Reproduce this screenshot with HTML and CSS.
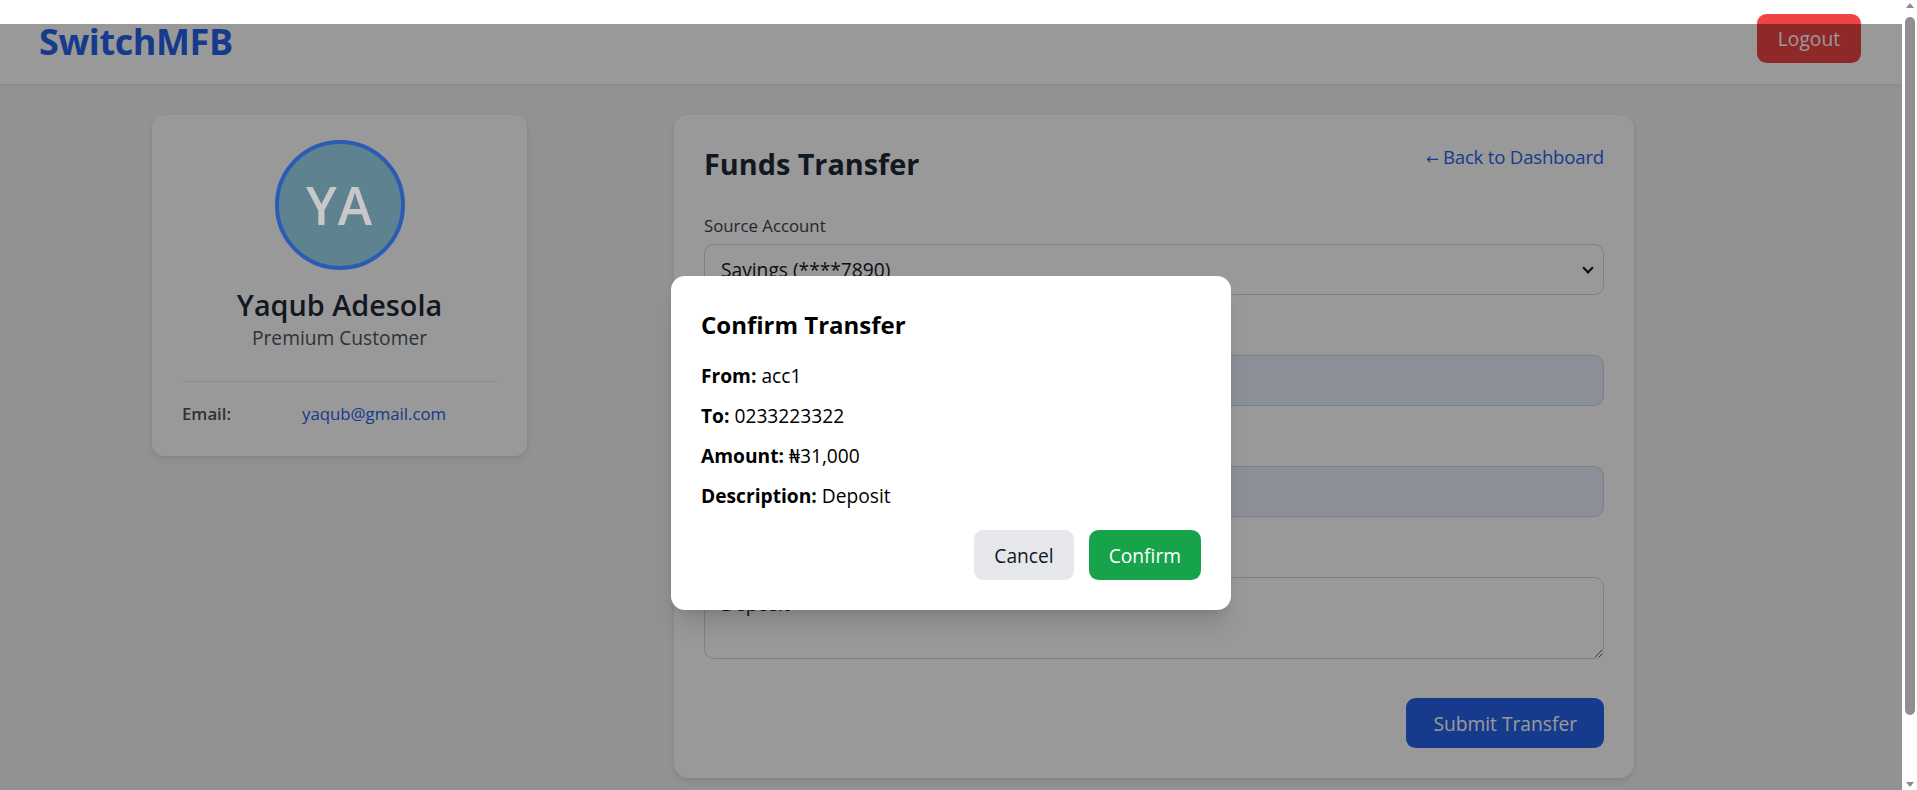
FILE: index.html
```html
<!DOCTYPE html>
<html lang="en">
<head>
<meta charset="utf-8">
<title>SwitchMFB - Funds Transfer</title>
<link rel="stylesheet" href="styles.css">
</head>
<body>
<header class="topbar">
  <div class="logo">SwitchMFB</div>
  <button type="button" class="btn-logout">Logout</button>
</header>

<main class="layout">
  <aside class="profile-card">
    <div class="avatar">YA</div>
    <h2 class="profile-name">Yaqub Adesola</h2>
    <p class="profile-tier">Premium Customer</p>
    <div class="profile-details">
      <div class="detail-row">
        <span class="detail-label">Email:</span>
        <span class="detail-value">yaqub@gmail.com</span>
      </div>
    </div>
  </aside>

  <section class="transfer-card">
    <div class="transfer-head">
      <h1 class="transfer-title">Funds Transfer</h1>
      <a class="back-link" href="#"><span class="back-arrow">←</span> Back to Dashboard</a>
    </div>
    <form class="transfer-form">
      <div class="field">
        <label class="field-label">Source Account</label>
        <div class="select-wrap">
          <select class="field-control field-select">
            <option>Savings (****7890)</option>
          </select>
        </div>
      </div>
      <div class="field">
        <label class="field-label">Destination Account Number</label>
        <input class="field-control autofilled" type="text" value="0233223322">
      </div>
      <div class="field">
        <label class="field-label">Amount (₦)</label>
        <input class="field-control autofilled" type="text" value="31000">
      </div>
      <div class="field field-last">
        <label class="field-label">Description</label>
        <textarea class="field-control field-textarea" rows="2">Deposit</textarea>
      </div>
      <div class="form-actions">
        <button type="button" class="btn-submit">Submit Transfer</button>
      </div>
    </form>
  </section>
</main>

<div class="modal-overlay">
  <div class="modal">
    <h3 class="modal-title">Confirm Transfer</h3>
    <p class="modal-line"><strong>From:</strong> acc1</p>
    <p class="modal-line"><strong>To:</strong> 0233223322</p>
    <p class="modal-line"><strong>Amount:</strong> ₦31,000</p>
    <p class="modal-line"><strong>Description:</strong> Deposit</p>
    <div class="modal-actions">
      <button type="button" class="btn-cancel">Cancel</button>
      <button type="button" class="btn-confirm">Confirm</button>
    </div>
  </div>
</div>

<div class="scrollbar" aria-hidden="true">
  <span class="sb-arrow sb-up"></span>
  <span class="sb-thumb"></span>
  <span class="sb-arrow sb-down"></span>
</div>
</body>
</html>
```

FILE: styles.css
```css
* {
  box-sizing: border-box;
}

html {
  margin: 0;
  padding: 0;
  background: #f3f4f6;
}

body {
  position: relative;
  margin: 0 15px 0 0;
  padding: 0;
  min-height: 862px;
  background: #f3f4f6;
  font-family: "Open Sans", "Noto Sans", sans-serif;
  font-size: 19.2px;
  line-height: 28.8px;
  color: #111827;
}

html::-webkit-scrollbar {
  display: none;
}

/* Emulated browser scrollbar */
.scrollbar {
  position: fixed;
  z-index: 100;
  top: 0;
  right: 0;
  width: 15px;
  height: 790px;
  background: #ffffff;
  display: flex;
  flex-direction: column;
  align-items: center;
}

.sb-arrow {
  display: block;
  width: 0;
  height: 0;
  border-left: 4px solid transparent;
  border-right: 4px solid transparent;
}

.sb-up {
  margin-top: 3px;
  border-bottom: 5px solid #8b8b8b;
}

.sb-thumb {
  display: block;
  width: 10px;
  height: 698px;
  margin: 9px 0 0 1px;
  border-radius: 5px;
  background: #8f8f8f;
}

.sb-down {
  margin-top: auto;
  margin-bottom: 3px;
  border-top: 5px solid #8b8b8b;
}

/* Header */
.topbar {
  height: 84px;
  background: #ffffff;
  display: flex;
  align-items: center;
  justify-content: space-between;
  padding: 0 41px 0 39px;
  box-shadow: 0 1px 3px rgba(0, 0, 0, 0.08);
}

.logo {
  font-size: 36px;
  line-height: 48px;
  font-weight: 700;
  color: #2563eb;
  letter-spacing: -0.4px;
}

.btn-logout {
  height: 49px;
  margin-bottom: 7px;
  padding: 0 21px;
  border: 0;
  border-radius: 9.6px;
  background: #ef4444;
  color: #ffffff;
  font-family: inherit;
  font-size: 19.2px;
}

/* Layout */
.layout {
  display: flex;
  align-items: flex-start;
  gap: 147px;
  padding: 31px 0 0 152px;
}

/* Profile card */
.profile-card {
  width: 375px;
  flex: none;
  background: #ffffff;
  border-radius: 12px;
  padding: 25px 30px 30px;
  box-shadow: 0 4px 8px rgba(0, 0, 0, 0.08), 0 1px 3px rgba(0, 0, 0, 0.06);
  text-align: center;
}

.avatar {
  position: relative;
  z-index: 60;
  width: 130px;
  height: 130px;
  margin: 0 auto;
  border: 4.8px solid #2b5cb5;
  border-radius: 50%;
  background: #5f8290;
  color: #c8c8c8;
  font-size: 52px;
  font-weight: 600;
  display: flex;
  align-items: center;
  justify-content: center;
  letter-spacing: 1px;
}

.profile-name {
  margin: 16px 0 0;
  font-size: 28.8px;
  line-height: 38.4px;
  font-weight: 600;
  color: #1f2937;
}

.profile-tier {
  margin: 0;
  font-size: 19.2px;
  line-height: 28.8px;
  color: #4b5563;
}

.profile-details {
  margin-top: 28px;
  border-top: 1px solid #e5e7eb;
  padding-top: 20px;
  text-align: left;
}

.detail-row {
  display: flex;
  font-size: 16.8px;
  line-height: 24px;
}

.detail-label {
  width: 120px;
  flex: none;
  font-weight: 600;
  color: #4b5563;
}

.detail-value {
  color: #2563eb;
}

/* Transfer card */
.transfer-card {
  width: 960px;
  flex: none;
  background: #ffffff;
  border-radius: 14px;
  padding: 30px;
  box-shadow: 0 4px 8px rgba(0, 0, 0, 0.08), 0 1px 3px rgba(0, 0, 0, 0.06);
}

.transfer-head {
  display: flex;
  align-items: flex-start;
  justify-content: space-between;
  margin-bottom: 31px;
}

.transfer-title {
  margin: 0;
  font-size: 28.8px;
  line-height: 38.4px;
  font-weight: 700;
  color: #1f2937;
}

.back-link {
  color: #2563eb;
  text-decoration: none;
  font-size: 18.6px;
  line-height: 28.8px;
  margin-top: -2px;
  letter-spacing: -0.2px;
}

.back-arrow {
  font-family: "DejaVu Sans", sans-serif;
  font-size: 15px;
}

.field {
  margin-bottom: 30px;
}

.field-last {
  margin-bottom: 0;
}

.field-label {
  display: block;
  font-size: 16.8px;
  line-height: 24px;
  font-weight: 500;
  color: #374151;
  margin-bottom: 6px;
}

.field-control {
  display: block;
  width: 100%;
  height: 51px;
  border: 1px solid #d1d5db;
  border-radius: 9.6px;
  padding: 0 16px;
  font-family: inherit;
  font-size: 19.2px;
  color: #111827;
  background: #ffffff;
}

.autofilled {
  background: #e8f0fe;
}

.select-wrap {
  position: relative;
}

.field-select {
  appearance: none;
  -webkit-appearance: none;
}

.select-wrap::after {
  content: "";
  position: absolute;
  right: 12px;
  top: 50%;
  width: 6px;
  height: 6px;
  margin-top: -6px;
  border-right: 2px solid #111;
  border-bottom: 2px solid #111;
  transform: rotate(45deg);
  pointer-events: none;
}

.field-textarea {
  height: 82px;
  padding: 12px 16px 10px;
  line-height: 28.8px;
  resize: vertical;
}

.form-actions {
  display: flex;
  justify-content: flex-end;
  padding-top: 39px;
}

.btn-submit {
  height: 50px;
  padding: 0 27px;
  border: 0;
  border-radius: 9.6px;
  background: #2563eb;
  color: #ffffff;
  font-family: inherit;
  font-size: 19.2px;
}

/* Modal */
.modal-overlay {
  position: absolute;
  z-index: 50;
  top: 24px;
  left: 0;
  right: 0;
  height: 838px;
  background: rgba(0, 0, 0, 0.4);
  display: flex;
  align-items: center;
  justify-content: center;
}

.modal {
  width: 560px;
  background: #ffffff;
  border-radius: 14px;
  padding: 32px 30px 30px;
  box-shadow: 0 20px 25px -5px rgba(0, 0, 0, 0.12), 0 8px 10px -6px rgba(0, 0, 0, 0.1);
  color: #000000;
}

.modal-title {
  margin: 0 0 21px;
  font-size: 24px;
  line-height: 33.6px;
  font-weight: 700;
}

.modal-line {
  margin: 0 0 11.2px;
  font-size: 19.2px;
  line-height: 28.8px;
}

.modal-line strong {
  font-weight: 700;
}

.modal-actions {
  display: flex;
  justify-content: flex-end;
  gap: 15px;
  margin-top: 19px;
}

.btn-cancel,
.btn-confirm {
  height: 50px;
  padding: 0 20px;
  border: 0;
  border-radius: 9.6px;
  font-family: inherit;
  font-size: 19.2px;
}

.btn-cancel {
  background: #e5e7eb;
  color: #111827;
}

.btn-confirm {
  background: #16a34a;
  color: #ffffff;
}
```
